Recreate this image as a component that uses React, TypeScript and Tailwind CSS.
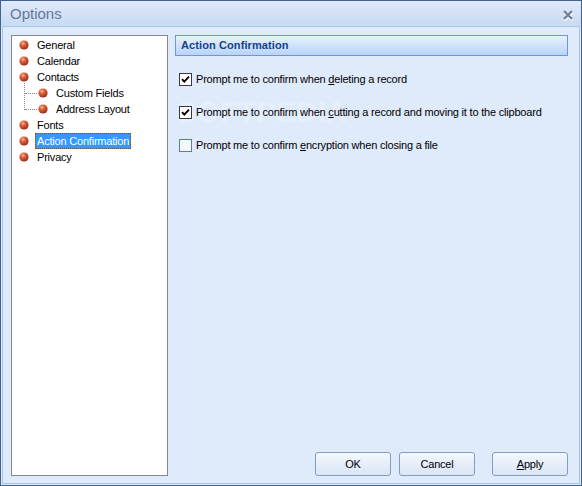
import React from "react";

const Bullet = () => (
  <svg width="10" height="10" viewBox="0 0 10 10" className="shrink-0">
    <defs>
      <radialGradient id="bg1" cx="0.38" cy="0.32" r="0.7">
        <stop offset="0" stopColor="#fbc2a0" />
        <stop offset="0.35" stopColor="#e2643a" />
        <stop offset="1" stopColor="#9b2c12" />
      </radialGradient>
    </defs>
    <circle cx="5" cy="5" r="4.6" fill="url(#bg1)" />
  </svg>
);

const Check = ({ checked }: { checked: boolean }) => (
  <div
    className={
      "w-[13px] h-[13px] shrink-0 border flex items-center justify-center " +
      (checked ? "border-[#3a3a3a] bg-white" : "border-[#4d7cc4] bg-[#f4f8fe]")
    }
  >
    {checked && (
      <svg width="9" height="9" viewBox="0 0 9 9">
        <path d="M1 4.2 L3.3 6.6 L8 1.6" stroke="#000" strokeWidth="1.9" fill="none" />
      </svg>
    )}
  </div>
);

const TreeItem = ({
  label,
  child,
  selected,
}: {
  label: string;
  child?: boolean;
  selected?: boolean;
}) => (
  <div className={"h-4 flex items-center " + (child ? "pl-[26px]" : "pl-[7px]")}>
    <Bullet />
    <span
      className={
        "ml-[6px] px-[1px] leading-[14px] h-[16px] flex items-center " +
        (selected
          ? "bg-[#3399ff] text-white border border-dotted border-[#8a4a10]"
          : "text-black border border-transparent")
      }
    >
      {label}
    </span>
  </div>
);

const Button = ({ children }: { children: React.ReactNode }) => (
  <button className="w-[76px] h-[24px] rounded-[3px] border border-[#7f9dc6] bg-gradient-to-b from-[#f4f8fe] to-[#d9e5f6] text-[11px] text-black flex items-center justify-center">
    {children}
  </button>
);

export default function App() {
  return (
    <div
      className="w-[582px] h-[486px] flex flex-col border border-[#43638f] bg-[#dfeafb] text-[11px] tracking-[-0.2px] select-none"
      style={{ fontFamily: '"Liberation Sans", Arial, sans-serif' }}
    >
      {/* Title bar */}
      <div className="h-[25px] shrink-0 flex items-center justify-between bg-gradient-to-b from-[#dfeaf9] to-[#c8daf2] pl-[9px] pr-[7px]">
        <span className="text-[15px] tracking-normal text-[#65789a] mt-[2px]">Options</span>
        <svg width="12" height="12" viewBox="0 0 12 12" className="mt-[2px]">
          <path d="M2 2.5 L10 10.5 M10 2.5 L2 10.5" stroke="#ffffff" strokeWidth="2.4" transform="translate(0.5 1)" />
          <path d="M2 2 L10 10 M10 2 L2 10" stroke="#6f7f98" strokeWidth="2.2" />
        </svg>
      </div>
      {/* Body */}
      <div className="flex-1 flex px-[1px] pb-[1px]">
        <div className="flex-1 flex border border-[#a7c6ec] pt-[8px] pl-[8px] pr-[11px] pb-[7px] gap-[7px]">
          {/* Tree */}
          <div className="w-[157px] bg-white border border-[#85888f] pt-[1px] relative">
            <TreeItem label="General" />
            <TreeItem label="Calendar" />
            <TreeItem label="Contacts" />
            <TreeItem label="Custom Fields" child />
            <TreeItem label="Address Layout" child />
            <TreeItem label="Fonts" />
            <TreeItem label="Action Confirmation" selected />
            <TreeItem label="Privacy" />
            {/* dotted connector lines */}
            <div className="absolute left-[12px] top-[47px] h-[27px] border-l border-dotted border-[#8a8a8a]" />
            <div className="absolute left-[13px] top-[57px] w-[12px] border-t border-dotted border-[#8a8a8a]" />
            <div className="absolute left-[13px] top-[73px] w-[12px] border-t border-dotted border-[#8a8a8a]" />
          </div>
          {/* Right side */}
          <div className="flex-1 flex flex-col relative">
            <div className="absolute left-[2px] top-[63px] text-[29px] leading-none font-bold tracking-[0.5px] text-white/30 pointer-events-none">
              SOFTPEDIA
            </div>
            <div className="h-[21px] border border-[#7197d0] bg-gradient-to-b from-[#e9f2fe] to-[#b7d4f9] flex items-center pl-[5px]">
              <span className="font-bold text-[#15428b] tracking-[0.1px]">Action Confirmation</span>
            </div>
            <div className="flex flex-col gap-[20px] mt-[17px] pl-[4px] relative">
              <div className="flex items-center gap-[4px] h-[13px]">
                <Check checked />
                <span>
                  Prompt me to confirm when <u>d</u>eleting a record
                </span>
              </div>
              <div className="flex items-center gap-[4px] h-[13px]">
                <Check checked />
                <span>
                  Prompt me to confirm when <u>c</u>utting a record and moving it to the clipboard
                </span>
              </div>
              <div className="flex items-center gap-[4px] h-[13px]">
                <Check checked={false} />
                <span>
                  Prompt me to confirm <u>e</u>ncryption when closing a file
                </span>
              </div>
            </div>
            <div className="flex-1" />
            <div className="flex justify-end gap-[8px]">
              <Button>OK</Button>
              <Button>Cancel</Button>
              <div className="ml-[9px]">
                <Button>
                  <span>
                    <u>A</u>pply
                  </span>
                </Button>
              </div>
            </div>
          </div>
        </div>
      </div>
    </div>
  );
}
